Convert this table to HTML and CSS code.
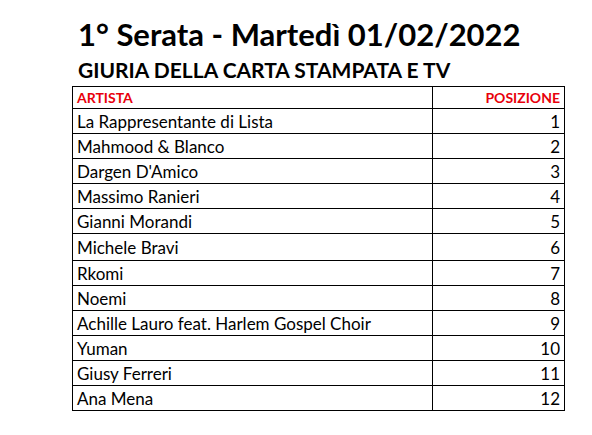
FILE: index.html
```html
<!DOCTYPE html>
<html lang="it">
<head>
<meta charset="utf-8">
<title>1° Serata - Martedì 01/02/2022</title>
<link rel="stylesheet" href="styles.css">
</head>
<body>
<div class="page">
  <h1 class="title">1° Serata - Martedì 01/02/2022</h1>
  <h2 class="subtitle">GIURIA DELLA CARTA STAMPATA E TV</h2>
  <table class="ranking">
    <thead>
      <tr><th class="artist">ARTISTA</th><th class="pos">POSIZIONE</th></tr>
    </thead>
    <tbody>
      <tr><td class="artist">La Rappresentante di Lista</td><td class="pos">1</td></tr>
      <tr><td class="artist">Mahmood &amp; Blanco</td><td class="pos">2</td></tr>
      <tr><td class="artist">Dargen D'Amico</td><td class="pos">3</td></tr>
      <tr><td class="artist">Massimo Ranieri</td><td class="pos">4</td></tr>
      <tr><td class="artist">Gianni Morandi</td><td class="pos">5</td></tr>
      <tr class="tall"><td class="artist">Michele Bravi</td><td class="pos">6</td></tr>
      <tr><td class="artist">Rkomi</td><td class="pos">7</td></tr>
      <tr><td class="artist">Noemi</td><td class="pos">8</td></tr>
      <tr><td class="artist">Achille Lauro feat. Harlem Gospel Choir</td><td class="pos">9</td></tr>
      <tr><td class="artist">Yuman</td><td class="pos">10</td></tr>
      <tr><td class="artist">Giusy Ferreri</td><td class="pos">11</td></tr>
      <tr><td class="artist">Ana Mena</td><td class="pos">12</td></tr>
    </tbody>
  </table>
</div>
</body>
</html>
```
FILE: styles.css
```css
html, body {
  margin: 0;
  padding: 0;
  background: #ffffff;
}
.page {
  padding: 14px 0 0 72px;
  font-family: Lato, "Liberation Sans", sans-serif;
  color: #000;
}
.title {
  margin: 0 0 0 6px;
  font-size: 31px;
  font-weight: 700;
  line-height: 40px;
}
.subtitle {
  margin: 0 0 0 6px;
  font-size: 21px;
  font-weight: 700;
  line-height: 32px;
}
.ranking {
  border-collapse: collapse;
  width: 493px;
  table-layout: fixed;
}
.ranking th,
.ranking td {
  border: 1px solid #000;
  padding: 0 4px;
  white-space: nowrap;
}
.ranking th {
  height: 21px;
  color: #e8000b;
  font-size: 14px;
  font-weight: 700;
}
.ranking td {
  height: 24px;
  font-size: 17px;
}
.ranking .tall td {
  height: 26px;
}
.ranking .artist {
  width: 351px;
  text-align: left;
}
.ranking .pos {
  text-align: right;
}
```
